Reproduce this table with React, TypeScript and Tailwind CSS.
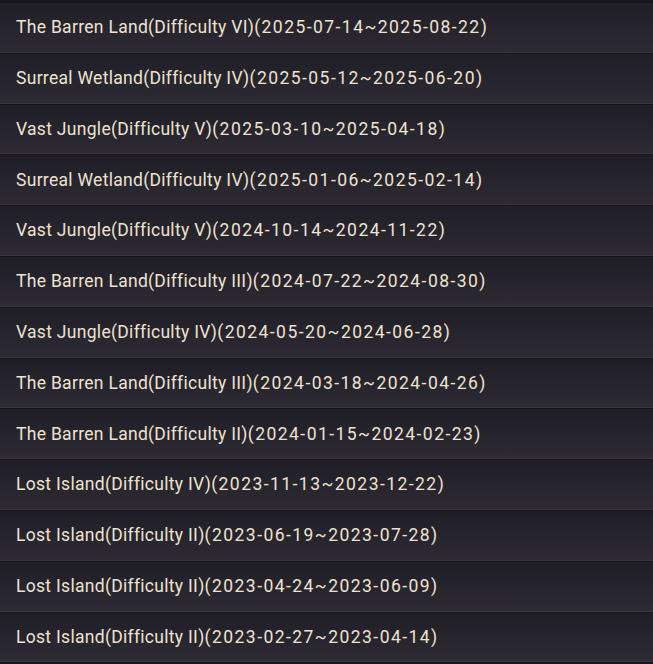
const seasons = [
  'The Barren Land(Difficulty VI)(2025-07-14~2025-08-22)',
  'Surreal Wetland(Difficulty IV)(2025-05-12~2025-06-20)',
  'Vast Jungle(Difficulty V)(2025-03-10~2025-04-18)',
  'Surreal Wetland(Difficulty IV)(2025-01-06~2025-02-14)',
  'Vast Jungle(Difficulty V)(2024-10-14~2024-11-22)',
  'The Barren Land(Difficulty III)(2024-07-22~2024-08-30)',
  'Vast Jungle(Difficulty IV)(2024-05-20~2024-06-28)',
  'The Barren Land(Difficulty III)(2024-03-18~2024-04-26)',
  'The Barren Land(Difficulty II)(2024-01-15~2024-02-23)',
  'Lost Island(Difficulty IV)(2023-11-13~2023-12-22)',
  'Lost Island(Difficulty II)(2023-06-19~2023-07-28)',
  'Lost Island(Difficulty II)(2023-04-24~2023-06-09)',
  'Lost Island(Difficulty II)(2023-02-27~2023-04-14)',
]

export default function App() {
  return (
    <div className="w-[653px] h-[664px] overflow-hidden bg-[#17161b] pt-[3px] font-['Roboto',sans-serif]">
      {seasons.map((s, i) => {
        // date part is spaced wider than the name in the original
        const cut = s.indexOf(')(') + 1
        return (
          <div
            key={i}
            className="h-[49.8px] mb-px flex items-center px-4 bg-linear-to-b from-[#1f1e26] to-[#2d2a33] border-b border-[#3a3640]"
          >
            <span className="text-[17.5px] text-[#efe2d0] whitespace-nowrap">
              <span className="tracking-[0.3px]">{s.slice(0, cut)}</span>
              <span className="tracking-[1.45px]">{s.slice(cut)}</span>
            </span>
          </div>
        )
      })}
    </div>
  )
}
